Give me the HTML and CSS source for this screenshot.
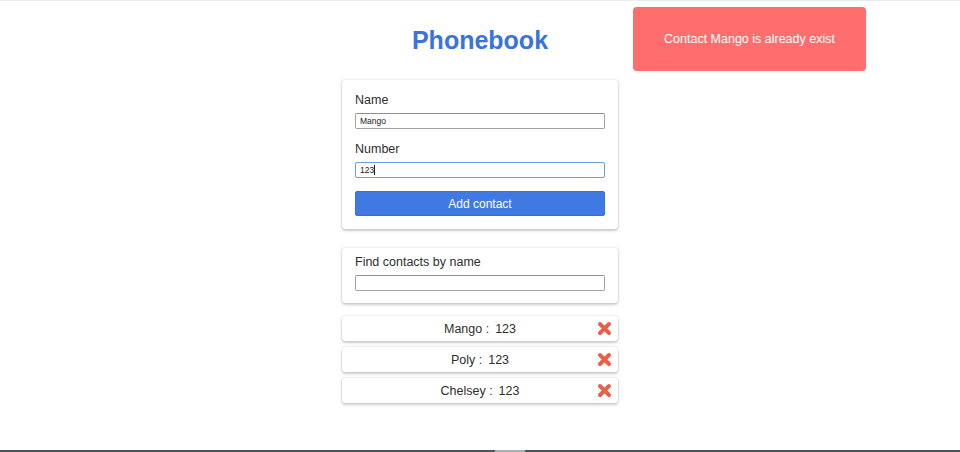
FILE: index.html
```html
<!DOCTYPE html>
<html lang="en">
<head>
<meta charset="utf-8">
<title>Phonebook</title>
<link rel="stylesheet" href="styles.css">
</head>
<body>
<div class="page">
  <main class="container">
    <h1 class="title">Phonebook</h1>
    <form class="card form-card">
      <label class="label" for="name">Name</label>
      <input class="input" id="name" type="text" value="Mango">
      <label class="label label-gap" for="number">Number</label>
      <div class="input input-focus" id="number"><span>123</span><span class="caret"></span></div>
      <button class="btn" type="button">Add contact</button>
    </form>
    <div class="card filter-card">
      <label class="label" for="filter">Find contacts by name</label>
      <input class="input" id="filter" type="text">
    </div>
    <ul class="list">
      <li class="item"><span class="item-text">Mango : &#8201;123</span><button class="del" type="button" aria-label="Delete"><svg width="15" height="15" viewBox="0 0 15 15"><path d="M3 3 L12 12 M12 3 L3 12" stroke="#e8604a" stroke-width="4" stroke-linecap="round"/></svg></button></li>
      <li class="item"><span class="item-text">Poly : &#8201;123</span><button class="del" type="button" aria-label="Delete"><svg width="15" height="15" viewBox="0 0 15 15"><path d="M3 3 L12 12 M12 3 L3 12" stroke="#e8604a" stroke-width="4" stroke-linecap="round"/></svg></button></li>
      <li class="item"><span class="item-text">Chelsey : &#8201;123</span><button class="del" type="button" aria-label="Delete"><svg width="15" height="15" viewBox="0 0 15 15"><path d="M3 3 L12 12 M12 3 L3 12" stroke="#e8604a" stroke-width="4" stroke-linecap="round"/></svg></button></li>
    </ul>
  </main>
  <div class="toast">Contact Mango is already exist</div>
  <div class="bottom-bar"><span class="bar-thumb"></span></div>
</div>
</body>
</html>
```
FILE: styles.css
```css
* { box-sizing: border-box; }
html, body { margin: 0; padding: 0; background: #fff; }
body {
  font-family: "Liberation Sans", Arial, sans-serif;
  color: #333;
  font-size: 12.5px;
}
.page {
  position: relative;
  height: 452px;
  display: flex;
  flex-direction: column;
  border-top: 1px solid #ebebeb;
}
.container {
  width: 276px;
  margin: 0 auto;
  display: flex;
  flex-direction: column;
}
.title {
  margin: 24px 0 25px;
  text-align: center;
  font-size: 25px;
  line-height: 30px;
  font-weight: 700;
  color: #3a72df;
}
.card {
  background: #fff;
  border-radius: 3px;
  box-shadow: 0 0 2px rgba(0,0,0,0.22), 0 2px 3px rgba(0,0,0,0.18);
  display: flex;
  flex-direction: column;
}
.form-card { padding: 12px 13px 13px; }
.filter-card { margin-top: 19px; padding: 6px 13px 12px; }
.label {
  display: block;
  font-size: 12.5px;
  line-height: 16px;
  color: #2e2e2e;
  margin-bottom: 5px;
}
.label-gap { margin-top: 12px; }
.input {
  display: block;
  width: 100%;
  height: 16px;
  margin: 0;
  padding: 0 4px;
  border: 1px solid #a2a2a2;
  border-top-color: #8e8e8e;
  border-radius: 2px;
  font-family: "Liberation Sans", Arial, sans-serif;
  font-size: 8.5px;
  line-height: 14px;
  color: #222;
  background: #fff;
  outline: none;
}
.input-focus {
  border-color: #6a9aea;
  display: flex;
  align-items: center;
}
.caret {
  display: inline-block;
  width: 1px;
  height: 10px;
  background: #222;
}
.btn {
  margin-top: 13px;
  height: 25px;
  width: 100%;
  border: 1px solid #3a6fd8;
  border-radius: 2px;
  background: #3f79e1;
  color: #fff;
  font-family: "Liberation Sans", Arial, sans-serif;
  font-size: 12px;
  padding: 0;
}
.list {
  list-style: none;
  margin: 13px 0 0;
  padding: 0;
  display: flex;
  flex-direction: column;
  gap: 6px;
}
.item {
  height: 25px;
  background: #fff;
  border-radius: 3px;
  box-shadow: 0 0 2px rgba(0,0,0,0.22), 0 2px 3px rgba(0,0,0,0.18);
  display: grid;
  grid-template-columns: 1fr auto 1fr;
  align-items: center;
  padding-right: 6px;
  padding-left: 6px;
}
.item-text {
  grid-column: 2;
  font-size: 12.5px;
  color: #2e2e2e;
}
.del {
  grid-column: 3;
  justify-self: end;
  background: none;
  border: 0;
  padding: 0;
  width: 15px;
  height: 15px;
  display: flex;
}
.toast {
  position: absolute;
  left: 633px;
  top: 6px;
  width: 233px;
  height: 64px;
  background: #ff6e6e;
  border-radius: 4px;
  color: #fff;
  font-size: 12.5px;
  display: flex;
  align-items: center;
  justify-content: center;
  box-shadow: 0 0 1px rgba(0,0,0,0.1);
}
.bottom-bar {
  margin-top: auto;
  height: 2px;
  background: #4d545d;
  display: flex;
}
.bar-thumb {
  margin-left: 495px;
  width: 30px;
  height: 2px;
  background: #a9adb2;
}
```
